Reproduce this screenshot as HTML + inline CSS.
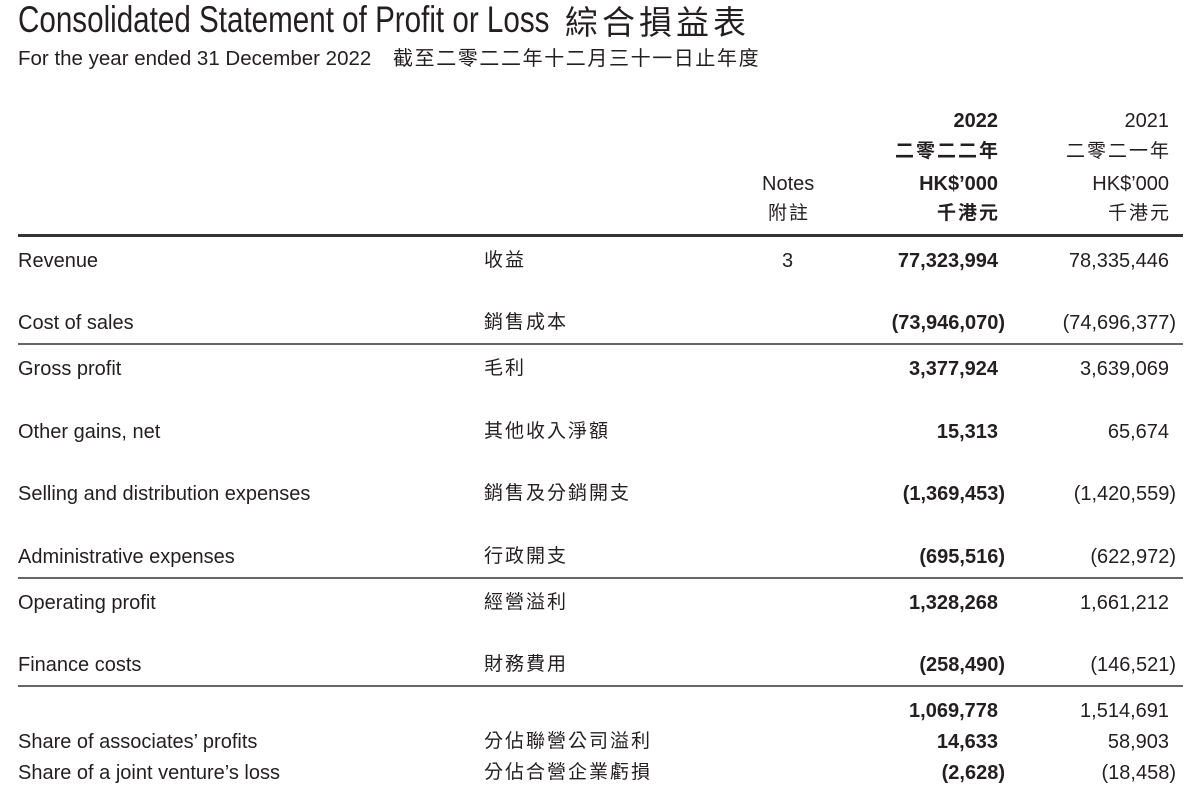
<!DOCTYPE html>
<html><head><meta charset="utf-8"><style>
body{margin:0;background:#fff;width:1190px;height:786px;overflow:hidden;position:relative;font-family:"Liberation Sans","Noto Sans CJK TC",sans-serif;color:#231f20;font-size:20px}
.t{position:absolute;line-height:22px;white-space:nowrap;margin-top:2px}
.r{text-align:right}
.b{font-weight:bold}
.l{position:absolute;left:18px;width:1165px;background:#555}
.c{letter-spacing:2px;font-size:19px}
</style></head><body>
<div class="t" style="left:18px;top:-2px;line-height:40px;font-size:37px;transform:scaleX(0.8);transform-origin:0 0">Consolidated Statement of Profit or Loss</div>
<div class="t" style="left:565px;top:-2px;line-height:40px;font-family:'Noto Sans CJK TC',sans-serif;font-size:33px;letter-spacing:4px">綜合損益表</div>
<div class="t" style="left:18px;top:46px;font-size:20.5px">For the year ended 31 December 2022</div>
<div class="t" style="left:393px;top:46px;font-size:20px;letter-spacing:1.6px">截至二零二二年十二月三十一日止年度</div>

<div class="t r b" style="right:192px;top:108px">2022</div>
<div class="t r" style="right:21px;top:108px">2021</div>
<div class="t r b c" style="right:190px;top:139px">二零二二年</div>
<div class="t r c" style="right:19px;top:139px">二零二一年</div>
<div class="t" style="left:762px;top:171px">Notes</div>
<div class="t r b" style="right:192px;top:171px">HK$’000</div>
<div class="t r" style="right:21px;top:171px">HK$’000</div>
<div class="t c" style="left:768px;top:201px">附註</div>
<div class="t r b c" style="right:190px;top:201px">千港元</div>
<div class="t r c" style="right:19px;top:201px">千港元</div>
<div class="l" style="top:234px;height:3px;background:#333"></div>

<div class="t" style="left:18px;top:248px">Revenue</div><div class="t c" style="left:484px;top:248px">收益</div><div class="t" style="left:782px;top:248px">3</div>
<div class="t r b" style="right:192px;top:248px">77,323,994</div><div class="t r" style="right:21px;top:248px">78,335,446</div>

<div class="t" style="left:18px;top:310px">Cost of sales</div><div class="t c" style="left:484px;top:310px">銷售成本</div>
<div class="t r b" style="right:185px;top:310px">(73,946,070)</div><div class="t r" style="right:14px;top:310px">(74,696,377)</div>
<div class="l" style="top:343px;height:1.5px;background:#666"></div>

<div class="t" style="left:18px;top:356px">Gross profit</div><div class="t c" style="left:484px;top:356px">毛利</div>
<div class="t r b" style="right:192px;top:356px">3,377,924</div><div class="t r" style="right:21px;top:356px">3,639,069</div>

<div class="t" style="left:18px;top:419px">Other gains, net</div><div class="t c" style="left:484px;top:419px">其他收入淨額</div>
<div class="t r b" style="right:192px;top:419px">15,313</div><div class="t r" style="right:21px;top:419px">65,674</div>

<div class="t" style="left:18px;top:481px">Selling and distribution expenses</div><div class="t c" style="left:484px;top:481px">銷售及分銷開支</div>
<div class="t r b" style="right:185px;top:481px">(1,369,453)</div><div class="t r" style="right:14px;top:481px">(1,420,559)</div>

<div class="t" style="left:18px;top:544px">Administrative expenses</div><div class="t c" style="left:484px;top:544px">行政開支</div>
<div class="t r b" style="right:185px;top:544px">(695,516)</div><div class="t r" style="right:14px;top:544px">(622,972)</div>
<div class="l" style="top:577px;height:1.5px;background:#666"></div>

<div class="t" style="left:18px;top:590px">Operating profit</div><div class="t c" style="left:484px;top:590px">經營溢利</div>
<div class="t r b" style="right:192px;top:590px">1,328,268</div><div class="t r" style="right:21px;top:590px">1,661,212</div>

<div class="t" style="left:18px;top:652px">Finance costs</div><div class="t c" style="left:484px;top:652px">財務費用</div>
<div class="t r b" style="right:185px;top:652px">(258,490)</div><div class="t r" style="right:14px;top:652px">(146,521)</div>
<div class="l" style="top:685px;height:1.5px;background:#666"></div>

<div class="t r b" style="right:192px;top:698px">1,069,778</div><div class="t r" style="right:21px;top:698px">1,514,691</div>

<div class="t" style="left:18px;top:729px">Share of associates’ profits</div><div class="t c" style="left:484px;top:729px">分佔聯營公司溢利</div>
<div class="t r b" style="right:192px;top:729px">14,633</div><div class="t r" style="right:21px;top:729px">58,903</div>

<div class="t" style="left:18px;top:760px">Share of a joint venture’s loss</div><div class="t c" style="left:484px;top:760px">分佔合營企業虧損</div>
<div class="t r b" style="right:185px;top:760px">(2,628)</div><div class="t r" style="right:14px;top:760px">(18,458)</div>
</body></html>
